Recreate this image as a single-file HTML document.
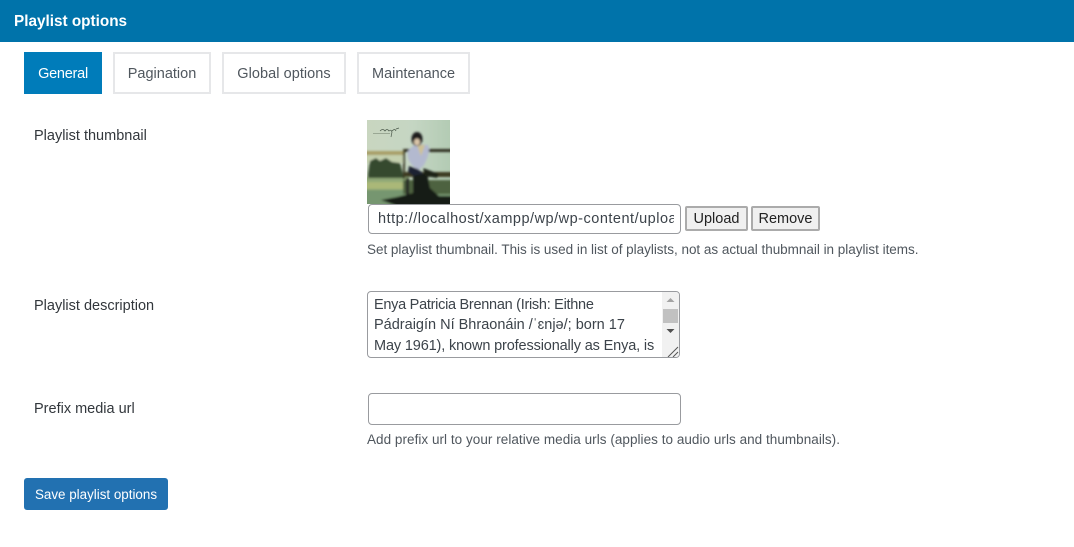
<!DOCTYPE html>
<html><head><meta charset="utf-8"><style>
html,body{margin:0;padding:0;background:#fff;width:1074px;height:547px;overflow:hidden}
body{position:relative;font-family:"Liberation Sans",sans-serif;color:#3c434a;font-size:14.5px}
.a{position:absolute;white-space:nowrap;box-sizing:border-box}
.t{text-align:center;border:2px solid #e6e7e9;background:#fff;height:42px;line-height:41px;top:52px;color:#50575e}
.l{color:#32373c;left:34px;line-height:20px}
.d{color:#50575e;left:367px;font-size:13.5px;line-height:18px}
.i{border:1px solid #999b9f;border-radius:4px;background:#fff;left:368px;width:313px}
.b{border:2px solid #ababab;border-radius:2px;background:#f0f0f0;top:206px;height:25px;line-height:23px;text-align:center;color:#222}
</style></head><body>
<div class="a" style="left:0;top:0;width:1074px;height:42px;background:#0073aa"></div>
<div class="a" style="left:14px;top:12px;line-height:20px;color:#fff;font-weight:bold;font-size:15.3px">Playlist options</div>

<div class="a t" style="left:24px;width:78px;background:#007cba;border-color:#007cba;color:#fff;letter-spacing:-.25px">General</div>
<div class="a t" style="left:113px;width:98px">Pagination</div>
<div class="a t" style="left:222px;width:124px;letter-spacing:.05px">Global options</div>
<div class="a t" style="left:357px;width:113px">Maintenance</div>

<div class="a l" style="top:126px">Playlist thumbnail</div>
<svg class="a" style="left:367px;top:120px" width="83" height="84" viewBox="0 0 83 84">
<defs>
<filter id="bl" x="-5%" y="-5%" width="110%" height="110%"><feGaussianBlur stdDeviation="1"/></filter>
<linearGradient id="sky" x1="0" y1="0" x2="1" y2="0"><stop offset="0" stop-color="#c9d6c0"/><stop offset=".55" stop-color="#c5d6c3"/><stop offset="1" stop-color="#b3cbb4"/></linearGradient>
</defs>
<rect width="83" height="84" fill="url(#sky)"/>
<g filter="url(#bl)">
<rect x="-2" y="31" width="38" height="4" fill="#a89f68"/>
<rect x="-2" y="35" width="38" height="8" fill="#c4d0ae"/>
<rect x="-2" y="57" width="44" height="30" fill="#8fa877"/>
<rect x="-2" y="62" width="38" height="7" fill="#aab878"/>
<rect x="-2" y="70" width="87" height="16" fill="#76966f"/>
<path d="M1 54 L3 41 L9 38 L13 41 L19 38 L25 42 L33 43 L36 54 L36 58 L1 58Z" fill="#344a2f"/>
<rect x="36" y="29" width="49" height="3" fill="#2e2f22"/>
<rect x="36" y="29" width="2" height="30" fill="#3a3b28"/>
<rect x="36" y="52" width="49" height="5" fill="#3c3a22"/>
<rect x="36" y="60" width="49" height="14" fill="#4e6240"/>
<rect x="39" y="58" width="3" height="18" fill="#222"/>
<path d="M41 31 Q46 25 50 24 L61 25 Q64 32 57 45 L52 50 L47 47 Q39 40 41 31Z" fill="#b3b9cf"/>
<path d="M50 25 L58 25 L54 36Z" fill="#cfc296"/>
<path d="M42 46 L51 49 L58 55 L53 60 Q45 55 41 52Z" fill="#1f2433"/>
<ellipse cx="50" cy="19" rx="5.5" ry="7" fill="#1a1a1c"/>
<ellipse cx="50" cy="22" rx="3" ry="3.5" fill="#d9c4a8"/>
<path d="M46 56 L60 53 L63 68 L72 76 L85 76 L85 86 L30 86 L14 80 L30 77 L46 73Z" fill="#141a13"/>
<path d="M56 48 L72 54 L70 58 L58 56Z" fill="#1a2018"/>
</g>
<path d="M13 11 q3 -3 5 0 q2 -3 4 0 q2 -2 3 1 l-1 5 M25 11 q3 -3 4 0 M29 9 l3 -1" fill="none" stroke="#4c5a4c" stroke-width=".7"/>
<rect x="6" y="13" width="17" height="1" fill="#9aa894"/>
</svg>
<div class="a i" style="top:204px;height:30px;line-height:29px;padding-left:9px;overflow:hidden;color:#3c434a;font-size:14.5px;letter-spacing:.5px"><span style="display:block;width:296px;overflow:hidden">http://localhost/xampp/wp/wp-content/uploads/enya.jpg</span></div>
<div class="a b" style="left:685px;width:63px">Upload</div>
<div class="a b" style="left:751px;width:69px">Remove</div>
<div class="a d" style="top:240.5px;letter-spacing:-.02px">Set playlist thumbnail. This is used in list of playlists, not as actual thubmnail in playlist items.</div>

<div class="a l" style="top:296px">Playlist description</div>
<div class="a i" style="top:291px;left:367px;width:313px;height:67px;overflow:hidden;color:#3c434a;font-size:14.5px;line-height:21px">
<div class="a" style="left:6px;top:2px"><span style="letter-spacing:-.28px;position:relative;top:1px">Enya Patricia Brennan (Irish: Eithne</span><br>Pádraigín Ní Bhraonáin /ˈɛnjə/; born 17<br><span style="letter-spacing:-.14px">May 1961), known professionally as Enya, is</span></div>
<div class="a" style="right:0;top:0;width:17px;height:66px;background:#f1f1f1"></div>
<div class="a" style="right:1px;top:17px;width:15px;height:14px;background:#c1c1c1"></div>
<svg class="a" style="right:0;top:0" width="17" height="66"><path d="M8.5 6l4 4h-8z" fill="#a3a3a3"/><path d="M4.5 37h8l-4 4z" fill="#505050"/><path d="M6 65L16 55M11 65l5-5" stroke="#555" stroke-width="1"/></svg>
</div>

<div class="a l" style="top:399px">Prefix media url</div>
<div class="a i" style="top:393px;height:32px"></div>
<div class="a d" style="top:431px;letter-spacing:.04px">Add prefix url to your relative media urls (applies to audio urls and thumbnails).</div>

<div class="a" style="left:24px;top:478px;width:144px;height:32px;background:#2271b1;border-radius:3px;color:#fff;text-align:center;line-height:33px;font-size:13.4px">Save playlist options</div>
</body></html>
